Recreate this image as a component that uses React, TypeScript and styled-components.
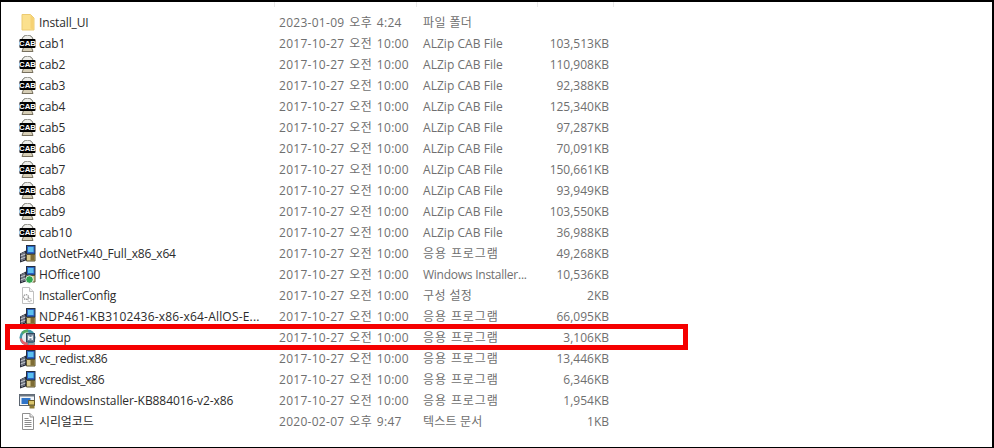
import React from "react";
import styled, { createGlobalStyle } from "styled-components";

const Global = createGlobalStyle`
  html, body { margin: 0; padding: 0; background: #fff; }
  body { width: 994px; height: 448px; overflow: hidden; }
`;

const Frame = styled.div`
  box-sizing: border-box;
  width: 994px;
  height: 448px;
  border-style: solid;
  border-color: #000;
  border-width: 2px 2px 1px 1px;
  background: #fff;
  padding-top: 10px;
  position: relative;
  overflow: hidden;
  font-family: "Open Sans", "Noto Sans CJK KR", sans-serif;
  font-size: 12px;
`;

const Ticks = styled.div`
  position: absolute;
  top: 0;
  left: 0;
  right: 0;
  height: 5px;
`;

const Tick = styled.span<{ $x: number }>`
  position: absolute;
  top: 0;
  left: ${(p) => p.$x}px;
  width: 1px;
  height: 5px;
  background: #e8e8e8;
`;

const List = styled.div`
  display: flex;
  flex-direction: column;
`;

const Row = styled.div`
  position: relative;
  display: grid;
  grid-template-columns: 38px 240px 144px 110px 76px;
  height: 21px;
  line-height: 21px;
  align-items: center;
  white-space: nowrap;
`;

const IconCell = styled.div`
  display: flex;
  justify-content: flex-end;
  padding-right: 3px;
  height: 21px;
  align-items: center;
`;

const Name = styled.div<{ $track: number }>`
  color: #2b2b2b;
  overflow: hidden;
  letter-spacing: ${(p) => p.$track}px;
`;

const Cell = styled.div<{ $track?: number; $words?: number }>`
  color: #6f6f6f;
  letter-spacing: ${(p) => p.$track ?? 0}px;
  word-spacing: ${(p) => p.$words ?? 0}px;
`;

const Size = styled(Cell)`
  text-align: right;
`;

const Highlight = styled.div`
  position: absolute;
  box-sizing: border-box;
  left: 4px;
  top: -3px;
  width: 683px;
  height: 26px;
  border: 5px solid #f50000;
  pointer-events: none;
`;

const Folder = () => (
  <svg width="16" height="17" viewBox="0 0 16 17">
    <path d="M2 .5h8.500l3.500 3.500v12H2z" fill="#fbe08e" stroke="#eccb72" strokeWidth="1" />
    <path d="M10.500 1v13.500l3 1V4z" fill="#f6d274" />
  </svg>
);

const Cab = () => (
  <svg width="17" height="17" viewBox="0 0 17 17">
    <path d="M3 5a5.500 5 0 0 1 11 0" fill="#eeeeea" stroke="#6f6f66" strokeWidth="1" />
    <path d="M4.500 12.500h8l1.500 4h-11z" fill="#d6ceb6" stroke="#77705e" strokeWidth="1" />
    <rect x="0.500" y="4" width="16" height="9" rx="1" fill="#000" />
    <text x="8.500" y="11.200" textAnchor="middle" fontSize="7.800" fontWeight="700" fontFamily="'Liberation Sans', sans-serif" fill="#fff">CAB</text>
  </svg>
);

const Installer = ({ badge }: { badge?: "green" | "none" }) => (
  <svg width="17" height="18" viewBox="0 0 17 18">
    <rect x="7.500" y="0.500" width="8.500" height="8.500" fill="#2a62c4" stroke="#25303f" strokeWidth="1" />
    <rect x="9" y="2" width="5.500" height="5" fill="#5cc0ee" />
    <path d="M1 8.500l6-3v10l-6 2z" fill="#262a38" />
    <path d="M3 8v8M5 7v8M1.500 11l5-2M1.500 14l5-2" stroke="#d9dee6" strokeWidth="0.800" />
    <path d="M7.500 9.500h8.500v6.500h-8.500z" fill="#d9c98e" stroke="#5b5230" strokeWidth="1" />
    {badge === "green" ? (
      <circle cx="10.500" cy="13.500" r="3.800" fill="#30a850" stroke="#fff" strokeWidth="0.800" />
    ) : (
      <path d="M11.500 10h4v5.500h-4z" fill="#7e6c35" />
    )}
  </svg>
);

const ConfigFile = () => (
  <svg width="16" height="17" viewBox="0 0 16 17">
    <path d="M2.500.5h7l4 4v12h-11z" fill="#fff" stroke="#c0c0c0" />
    <path d="M9.500.5v4h4" fill="#eee" stroke="#c0c0c0" />
    <circle cx="6" cy="10" r="2.400" fill="none" stroke="#9a9a9a" strokeWidth="1.400" strokeDasharray="1.300 .7" />
    <circle cx="9.500" cy="13" r="1.700" fill="none" stroke="#aaa" strokeWidth="1.200" strokeDasharray="1 .6" />
  </svg>
);

const SetupIcon = () => (
  <svg width="17" height="17" viewBox="0 0 17 17">
    <circle cx="8.500" cy="8.500" r="8" fill="#3f97a8" />
    <path d="M.8 9.500A8 8 0 0 0 8.500 16.500L9 13 3.500 9.500z" fill="#e4626a" />
    <path d="M2.500 3A8 8 0 0 1 9 .5L9 3.500 4.500 6z" fill="#55a963" />
    <circle cx="8" cy="8.500" r="5" fill="#e9eef2" />
    <rect x="7.500" y="4.500" width="8" height="8.500" fill="#6d8296" stroke="#33475c" strokeWidth="1" />
    <path d="M9.800 6.500v4.500M13.200 6.500v4.500M9.800 8.700h3.400" stroke="#fff" strokeWidth="1.200" />
    <path d="M9.500 14h6.500v2.500h-6.500z" fill="#9a9fa6" />
  </svg>
);

const WinInstaller = () => (
  <svg width="17" height="17" viewBox="0 0 17 17">
    <rect x="0.500" y="2.500" width="15" height="11" fill="#f4f6f8" stroke="#5a6470" />
    <rect x="0.500" y="2.500" width="15" height="2" fill="#6d7680" />
    <rect x="2.500" y="6" width="9" height="6" fill="#2f74c8" />
    <path d="M9.500 8.500h6v4.500h-6z" fill="#d9c56e" stroke="#6a5a24" />
    <path d="M10.500 13.500h5v3h-5z" fill="#8f7d35" />
  </svg>
);

const TextDoc = () => (
  <svg width="16" height="17" viewBox="0 0 16 17">
    <path d="M2.500.5h7.500l3.500 3.500v12.500h-11z" fill="#fff" stroke="#8f8f8f" />
    <path d="M10 .5v3.500h3.500" fill="#ececec" stroke="#8f8f8f" />
    <path d="M4.500 5.500h4M4.500 7.500h7M4.500 9.500h7M4.500 11.500h7M4.500 13.500h7" stroke="#8b8b8b" strokeWidth="1" />
  </svg>
);

type Item = {
  icon: React.ReactNode;
  name: string;
  date: string;
  type: string;
  size: string;
  mark?: boolean;
  nameTrack?: number;
  typeTrack?: number;
};

const D = "2017-10-27 오전 10:00";
const A = "ALZip CAB File";
const P = "응용 프로그램";
const PT = 0.9;

const cabs: [string, string][] = [
  ["cab1", "103,513KB"], ["cab2", "110,908KB"], ["cab3", "92,388KB"], ["cab4", "125,340KB"], ["cab5", "97,287KB"],
  ["cab6", "70,091KB"], ["cab7", "150,661KB"], ["cab8", "93,949KB"], ["cab9", "103,550KB"], ["cab10", "36,988KB"],
];

const items: Item[] = [
  { icon: <Folder />, name: "Install_UI", date: "2023-01-09 오후 4:24", type: "파일 폴더", size: "", typeTrack: 0.4 },
  ...cabs.map(([name, size]) => ({ icon: <Cab />, name, date: D, type: A, size, typeTrack: 0.05 })),
  { icon: <Installer />, name: "dotNetFx40_Full_x86_x64", date: D, type: P, size: "49,268KB", typeTrack: PT, nameTrack: -0.16 },
  { icon: <Installer badge="green" />, name: "HOffice100", date: D, type: "Windows Installer...", size: "10,536KB", typeTrack: -0.25 },
  { icon: <ConfigFile />, name: "InstallerConfig", date: D, type: "구성 설정", size: "2KB", typeTrack: 0.4, nameTrack: -0.25 },
  { icon: <Installer />, name: "NDP461-KB3102436-x86-x64-AllOS-E...", date: D, type: P, size: "66,095KB", nameTrack: 0.2, typeTrack: PT },
  { icon: <SetupIcon />, name: "Setup", date: D, type: P, size: "3,106KB", mark: true, typeTrack: PT },
  { icon: <Installer />, name: "vc_redist.x86", date: D, type: P, size: "13,446KB", typeTrack: PT, nameTrack: -0.3 },
  { icon: <Installer />, name: "vcredist_x86", date: D, type: P, size: "6,346KB", typeTrack: PT, nameTrack: -0.3 },
  { icon: <WinInstaller />, name: "WindowsInstaller-KB884016-v2-x86", date: D, type: P, size: "1,954KB", typeTrack: PT, nameTrack: -0.08 },
  { icon: <TextDoc />, name: "시리얼코드", date: "2020-02-07 오후 9:47", type: "텍스트 문서", size: "1KB", typeTrack: 0.2 },
];

export default function App() {
  return (
    <>
      <Global />
      <Frame>
        <Ticks>
          <Tick $x={273} />
          <Tick $x={415} />
          <Tick $x={536} />
          <Tick $x={612} />
        </Ticks>
        <List>
          {items.map((it) => (
            <Row key={it.name}>
              <IconCell>{it.icon}</IconCell>
              <Name $track={it.nameTrack ?? -0.12}>{it.name}</Name>
              <Cell $track={0.28} $words={1.5}>{it.date}</Cell>
              <Cell $track={it.typeTrack}>{it.type}</Cell>
              <Size>{it.size}</Size>
              {it.mark && <Highlight />}
            </Row>
          ))}
        </List>
      </Frame>
    </>
  );
}
